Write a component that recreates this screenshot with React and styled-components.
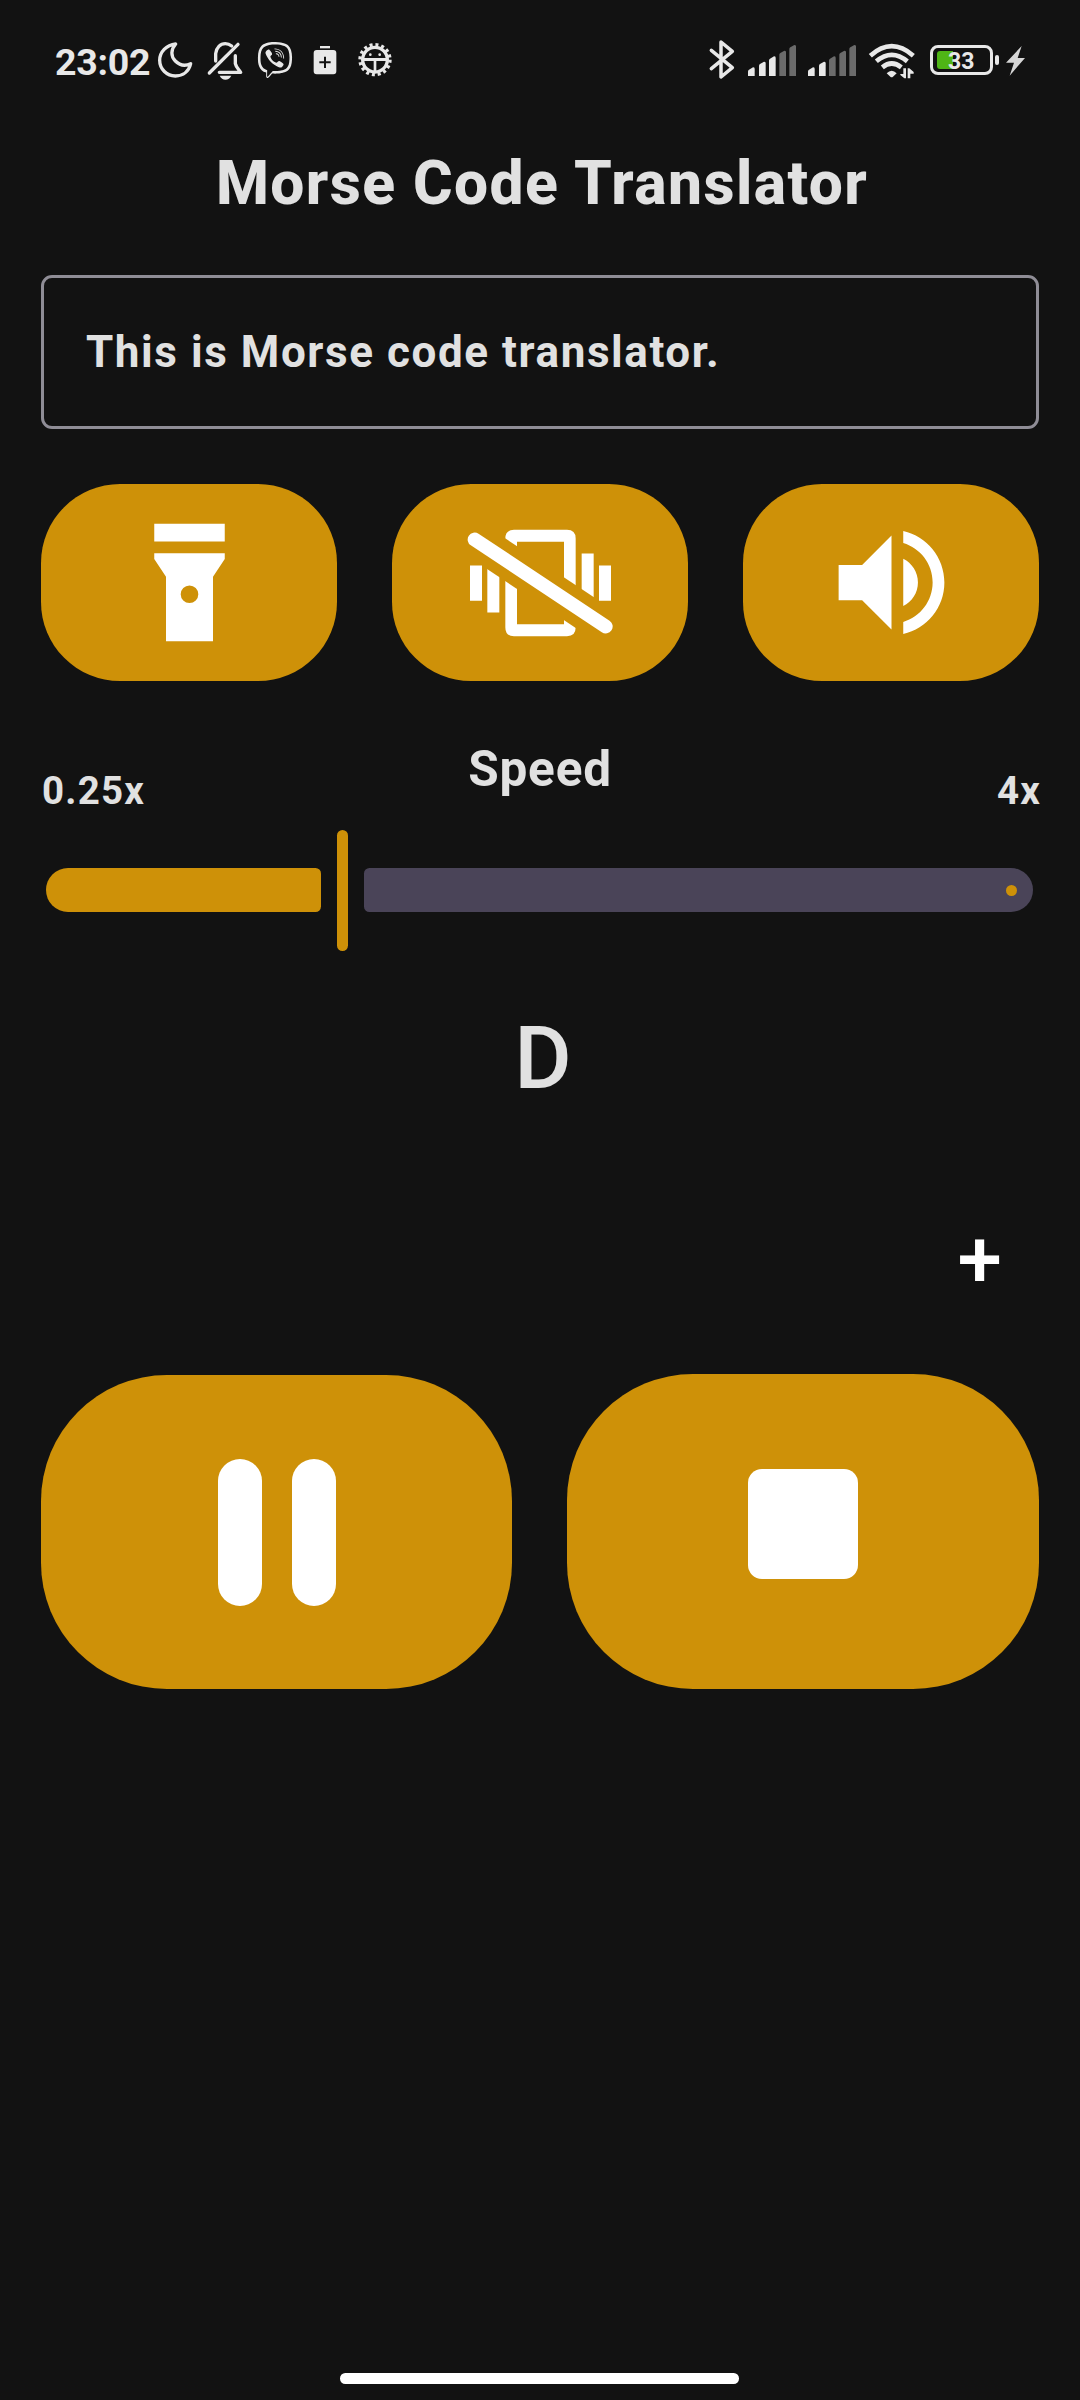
import React from "react";
import styled, { createGlobalStyle } from "styled-components";
import { FaViber } from "react-icons/fa";

const GOLD = "#ce9108";
const BG = "#121212";
const STATUS = "#e8e8e8";

const GlobalStyle = createGlobalStyle`
  * { box-sizing: border-box; }
  html, body { margin: 0; padding: 0; background: ${BG}; }
  body { font-family: Roboto, "Noto Sans", sans-serif; color: #e1e1e1; }
`;

const Screen = styled.div`
  width: 1080px;
  height: 2400px;
  background: ${BG};
  display: flex;
  flex-direction: column;
  overflow: hidden;
`;

const StatusBar = styled.header`
  display: flex;
  justify-content: space-between;
  height: 143px;
  padding: 38px 0 0;
  color: ${STATUS};
`;

const StatusGroup = styled.div`
  display: flex;
  align-items: flex-start;
  padding-left: ${(p) => p.$left || 0}px;
  padding-right: ${(p) => p.$right || 0}px;
`;

const Clock = styled.span`
  width: 100px;
  font-size: 37.5px;
  line-height: 48px;
  font-weight: 700;
  letter-spacing: -0.25px;
  white-space: nowrap;
`;

const Glyph = styled.svg`
  display: block;
  height: 44px;
  flex: none;
`;

const ViberSlot = styled.span`
  display: flex;
  justify-content: center;
  width: 50px;
  padding-top: 4px;
  svg { width: 36px; height: 36px; }
`;

const BatteryWrap = styled.div`
  display: flex;
  align-items: center;
  gap: 2px;
  height: 44px;
`;

const BatteryShell = styled.div`
  position: relative;
  width: 63px;
  height: 30px;
  border: 3px solid ${STATUS};
  border-radius: 8px;
  display: flex;
  align-items: center;
  padding-left: 4px;
`;

const BatteryFill = styled.div`
  width: 16px;
  height: 18px;
  border-radius: 3px 0 0 3px;
  background: #4fb516;
`;

const BatteryText = styled.span`
  position: absolute;
  left: 15px;
  top: 1px;
  font-size: 23px;
  line-height: 25px;
  font-weight: 700;
`;

const BatteryTip = styled.div`
  width: 4px;
  height: 10px;
  border-radius: 2px;
  background: ${STATUS};
`;

const Main = styled.main`
  display: flex;
  flex-direction: column;
  padding: 0 41px;
`;

const Title = styled.h1`
  margin: 1px 0 0;
  padding-left: 4px;
  text-align: center;
  font-size: 60.5px;
  line-height: 80px;
  font-weight: 850;
  letter-spacing: 1.42px;
`;

const MessageField = styled.div`
  margin-top: 51px;
  height: 154px;
  border: 3px solid #8f8d96;
  border-radius: 11px;
  padding: 0 42px;
  display: flex;
  align-items: center;
  font-size: 44px;
  line-height: 60px;
  font-weight: 700;
  letter-spacing: 1.57px;
`;

const ToggleRow = styled.div`
  margin-top: 55px;
  display: grid;
  grid-template-columns: repeat(3, 296px);
  justify-content: space-between;
`;

const ToggleButton = styled.button`
  height: 197px;
  border: 0;
  padding: 0 0 0 ${(p) => p.$nudge || 0}px;
  border-radius: 79px;
  background: ${GOLD};
  color: #fff;
  display: flex;
  align-items: center;
  justify-content: center;
  svg { display: block; }
`;

const SpeedLabels = styled.div`
  margin-top: 58px;
  height: 78px;
  display: grid;
  grid-template-columns: 1fr auto 1fr;
  margin-left: 1px;
  margin-right: -2px;
`;

const SpeedTitle = styled.span`
  margin-right: 3px;
  font-size: 49.5px;
  line-height: 60px;
  font-weight: 700;
  letter-spacing: 0.8px;
`;

const RangeLabel = styled.span`
  align-self: end;
  justify-self: ${(p) => p.$side};
  font-size: 38.5px;
  line-height: 52px;
  font-weight: 700;
  letter-spacing: 1.2px;
`;

const Slider = styled.div`
  margin-top: 13px;
  height: 121px;
  padding: 0 6px 0 5px;
  display: flex;
  align-items: flex-start;
  gap: 16px;
`;

const ActiveTrack = styled.div`
  margin-top: 38px;
  width: 275px;
  height: 44px;
  border-radius: 22px 5.5px 5.5px 22px;
  background: ${GOLD};
`;

const Thumb = styled.div`
  width: 11px;
  height: 121px;
  border-radius: 5.5px;
  background: ${GOLD};
`;

const InactiveTrack = styled.div`
  margin-top: 38px;
  flex: 1;
  height: 44px;
  border-radius: 5.5px 22px 22px 5.5px;
  background: #4a4458;
  display: flex;
  align-items: center;
  justify-content: flex-end;
  padding-right: 16.5px;
`;

const StopMark = styled.div`
  width: 11px;
  height: 11px;
  border-radius: 50%;
  background: ${GOLD};
`;

const CurrentLetter = styled.div`
  margin-top: 55px;
  padding-left: 6px;
  text-align: center;
  font-size: 88px;
  line-height: 104px;
  font-weight: 500;
`;

const ExpandRow = styled.div`
  margin-top: 89px;
  height: 122px;
  display: flex;
  justify-content: flex-end;
  padding-right: 37px;
`;

const ExpandButton = styled.button`
  border: 0;
  padding: 0;
  background: none;
  color: #fff;
  font-family: inherit;
  font-size: 80px;
  line-height: 122px;
  font-weight: 460;
`;

const PlayerRow = styled.div`
  margin-top: 53px;
  display: flex;
  align-items: flex-end;
  justify-content: space-between;
`;

const PlayerButton = styled.button`
  width: ${(p) => p.$w}px;
  height: ${(p) => p.$h}px;
  border: 0;
  padding: 0 ${(p) => p.$right || 0}px ${(p) => p.$lift || 0}px ${(p) => p.$left || 0}px;
  border-radius: 126px;
  background: ${GOLD};
  display: flex;
  align-items: center;
  justify-content: center;
  gap: 29.3px;
`;

const PauseBar = styled.span`
  width: 44.2px;
  height: 147px;
  border-radius: 22.1px;
  background: #fff;
`;

const StopSquare = styled.span`
  width: 110px;
  height: 110px;
  border-radius: 14px;
  background: #fff;
`;

const HomeArea = styled.footer`
  margin-top: auto;
  display: flex;
  padding: 0 0 16.5px 340px;
`;

const HomeBar = styled.div`
  width: 399px;
  height: 10.5px;
  border-radius: 5.25px;
  background: #fff;
`;

function StatusGlyph({ from, to, children }) {
  return (
    <Glyph width={(to - from) / 3} viewBox={`${from} 39 ${to - from} 132`} fill="currentColor">
      {children}
    </Glyph>
  );
}

const BAR_SHAPES = [
  [174, 136, 127],
  [207, 119, 110],
  [237, 103, 94],
  [268, 86, 77],
  [298, 69, 60],
];

function Signal({ active }) {
  return (
    <StatusGlyph from={150} to={330}>
      {BAR_SHAPES.map(([x, left, right], i) => (
        <path
          key={x}
          d={`M${x} 153V${left + 3}Q${x} ${left} ${x + 3} ${left - 2}L${x + 15} ${right}Q${x + 20} ${right} ${x + 20} ${right + 4}V153Z`}
          fill={i < active ? STATUS : "#6b6b6b"}
        />
      ))}
    </StatusGlyph>
  );
}

function Moon() {
  return (
    <StatusGlyph from={345} to={480}>
      <path
        d="M407 57C379 60 359 81 359 106C359 133 381 153 406 153C430 153 447 138 452 116C435 124 418 120 406 108C392 94 392 74 407 57Z"
        fill="none" stroke="currentColor" strokeWidth="10" strokeLinejoin="round"
      />
    </StatusGlyph>
  );
}

function BellOff() {
  return (
    <StatusGlyph from={480} to={630}>
      <g fill="none" stroke="currentColor" strokeWidth="10" strokeLinecap="round" strokeLinejoin="round">
        <path d="M508 144L594 58" />
        <path d="M527 108V86C529 68 541 56 556 56C563 56 570 59 575 63" />
        <path d="M586 92V116C588 126 596 133 602 142H538" />
      </g>
      <path d="M539 152H574C570 160 564 164 556 164C549 164 543 160 539 152Z" />
    </StatusGlyph>
  );
}

function BatteryPlus() {
  return (
    <StatusGlyph from={780} to={930}>
      <path d="M840 63H870V70H840Z" />
      <path
        fillRule="evenodd"
        d="M830 75H880Q889 75 889 84V139Q889 148 880 148H830Q821 148 821 139V84Q821 75 830 75ZM852 95V109H838V115H852V129H858V115H872V109H858V95Z"
      />
    </StatusGlyph>
  );
}

function Gear() {
  return (
    <StatusGlyph from={930} to={1080}>
      <circle cx="1005" cy="104" r="45" fill="none" stroke="currentColor" strokeWidth="10" strokeDasharray="9 8.67" />
      <circle cx="1005" cy="104" r="37" fill="none" stroke="currentColor" strokeWidth="10" />
      <path d="M968 99H1042V108H1009V142H1001V108H968Z" />
      <circle cx="991" cy="89" r="4" />
      <circle cx="1019" cy="89" r="4" />
    </StatusGlyph>
  );
}

function Bluetooth() {
  return (
    <StatusGlyph from={45} to={150}>
      <path
        d="M64 76L127 128L93 156V51L127 79L64 131"
        fill="none" stroke="currentColor" strokeWidth="10.5" strokeLinecap="round" strokeLinejoin="round"
      />
    </StatusGlyph>
  );
}

function Wifi() {
  return (
    <StatusGlyph from={510} to={720}>
      <g fill="none" stroke="currentColor" strokeWidth="14">
        <path d="M541 92Q605 35 670 92" />
        <path d="M559 109Q605 70 652 109" />
        <path d="M577 127Q605 104 634 127" />
      </g>
      <path d="M590 145Q605 130 620 145L609 155Q605 158 601 155Z" />
      <path d="M631 147H640V130H648V160H643L631 150ZM653 160V130H658L671 141V146H661V160Z" />
    </StatusGlyph>
  );
}

function Bolt() {
  return (
    <StatusGlyph from={927} to={1050}>
      <path d="M995 63L948 113H972L959 152L1005 99H983Z" fill="#d6d6d6" />
    </StatusGlyph>
  );
}

function Flashlight() {
  return (
    <svg width="141" height="141" viewBox="0 0 24 24" fill="currentColor">
      <path d="M6 2h12v3H6z" />
      <path fillRule="evenodd" d="M6 7v1l2 3v11h8V11l2-3V7H6zM12 12.5a1.5 1.5 0 1 1 0 3a1.5 1.5 0 1 1 0-3z" />
    </svg>
  );
}

function VibrationOff() {
  return (
    <svg width="160" height="142" viewBox="240 124.5 480 426" fill="currentColor">
      <mask id="slash-gap" maskUnits="userSpaceOnUse" x="240" y="124" width="480" height="428">
        <rect x="240" y="124" width="480" height="428" fill="#fff" />
        <path d="M184 140.3L777 534.2" stroke="#000" strokeWidth="107" />
      </mask>
      <g mask="url(#slash-gap)">
        <path
          fillRule="evenodd"
          d="M402 178H561Q587 178 587 204V471Q587 497 561 497H402Q376 497 376 471V204Q376 178 402 178ZM411 214V461H552V214Z"
        />
        <path d="M322 249H358V426H322ZM605 249H641V426H605Z" />
      </g>
      <path d="M270 285H306V391H270ZM657 285H693V391H657Z" />
      <path d="M284 207L677 468" stroke="currentColor" strokeWidth="42" strokeLinecap="round" />
    </svg>
  );
}

function Volume() {
  return (
    <svg width="141" height="141" viewBox="0 0 24 24" fill="currentColor">
      <path d="M3 9v6h4l5 5V4L7 9H3zm13.5 3c0-1.77-1.02-3.29-2.5-4.03v8.05c1.48-.73 2.5-2.25 2.5-4.02zM14 3.23v2.06c2.89.86 5 3.54 5 6.71s-2.11 5.85-5 6.71v2.06c4.01-.91 7-4.49 7-8.77s-2.99-7.86-7-8.77z" />
    </svg>
  );
}

export default function App() {
  return (
    <>
      <GlobalStyle />
      <Screen>
        <StatusBar>
          <StatusGroup $left={55}>
            <Clock>23:02</Clock>
            <Moon />
            <BellOff />
            <ViberSlot><FaViber /></ViberSlot>
            <BatteryPlus />
            <Gear />
          </StatusGroup>
          <StatusGroup $right={40}>
            <Bluetooth />
            <Signal active={3} />
            <Signal active={2} />
            <Wifi />
            <BatteryWrap>
              <BatteryShell>
                <BatteryFill />
                <BatteryText>33</BatteryText>
              </BatteryShell>
              <BatteryTip />
            </BatteryWrap>
            <Bolt />
          </StatusGroup>
        </StatusBar>
        <Main>
          <Title>Morse Code Translator</Title>
          <MessageField>This is Morse code translator.</MessageField>
          <ToggleRow>
            <ToggleButton aria-label="Flashlight" $nudge={1}><Flashlight /></ToggleButton>
            <ToggleButton aria-label="Vibration"><VibrationOff /></ToggleButton>
            <ToggleButton aria-label="Sound" $nudge={1}><Volume /></ToggleButton>
          </ToggleRow>
          <SpeedLabels>
            <RangeLabel $side="start">0.25x</RangeLabel>
            <SpeedTitle>Speed</SpeedTitle>
            <RangeLabel $side="end">4x</RangeLabel>
          </SpeedLabels>
          <Slider>
            <ActiveTrack />
            <Thumb />
            <InactiveTrack><StopMark /></InactiveTrack>
          </Slider>
          <CurrentLetter>D</CurrentLetter>
          <ExpandRow>
            <ExpandButton>+</ExpandButton>
          </ExpandRow>
          <PlayerRow>
            <PlayerButton aria-label="Pause" $w={471} $h={314} $left={1}>
              <PauseBar />
              <PauseBar />
            </PlayerButton>
            <PlayerButton aria-label="Stop" $w={472} $h={315} $lift={16} $right={1}>
              <StopSquare />
            </PlayerButton>
          </PlayerRow>
        </Main>
        <HomeArea>
          <HomeBar />
        </HomeArea>
      </Screen>
    </>
  );
}
